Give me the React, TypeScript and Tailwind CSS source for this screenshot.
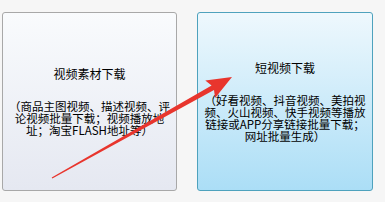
import React from "react";

const font = { fontFamily: '"Noto Sans CJK SC", "Liberation Sans", sans-serif' };

const Arrow: React.FC = () => (
  <svg
    className="pointer-events-none absolute left-0 top-0"
    width="385"
    height="202"
    viewBox="0 0 385 202"
  >
    <polygon
      points="51.7,177.4 211.6,85.6 205.3,80.6 232,77 215.1,98 214,90 52.3,178.6"
      fill="#e8352d"
    />
  </svg>
);

interface CardProps {
  title: string;
  lines: string[];
  active?: boolean;
}

const Card: React.FC<CardProps> = ({ title, lines, active }) => (
  <div
    className={
      active
        ? "flex h-[179px] w-[176px] flex-col items-center justify-center rounded-[3px] border border-[#4ea2bd] bg-gradient-to-b from-[#eef8fd] to-[#abdef6]"
        : "flex h-[179px] w-[175px] flex-col items-center justify-center rounded-[3px] border border-[#a8a8a8] bg-gradient-to-b from-[#f9fbfd] to-[#e5e8f1]"
    }
  >
    <div className="text-[12px] leading-[14px] text-black">{title}</div>
    <div className="mt-[19px] text-center text-[11.5px] leading-[12px] text-black">
      {lines.map((l) => (
        <div key={l}>{l}</div>
      ))}
    </div>
  </div>
);

export default function App() {
  return (
    <div className="relative h-[202px] w-[385px] bg-[#f6f6f6]" style={font}>
      <div className="flex gap-[20px] pl-[2px] pt-[12px]">
        <Card
          title="视频素材下载"
          lines={["（商品主图视频、描述视频、评", "论视频批量下载；视频播放地", "址；淘宝FLASH地址等）"]}
        />
        <Card
          active
          title="短视频下载"
          lines={[
            "（好看视频、抖音视频、美拍视",
            "频、火山视频、快手视频等播放",
            "链接或APP分享链接批量下载；",
            "网址批量生成）",
          ]}
        />
      </div>
      <Arrow />
    </div>
  );
}
